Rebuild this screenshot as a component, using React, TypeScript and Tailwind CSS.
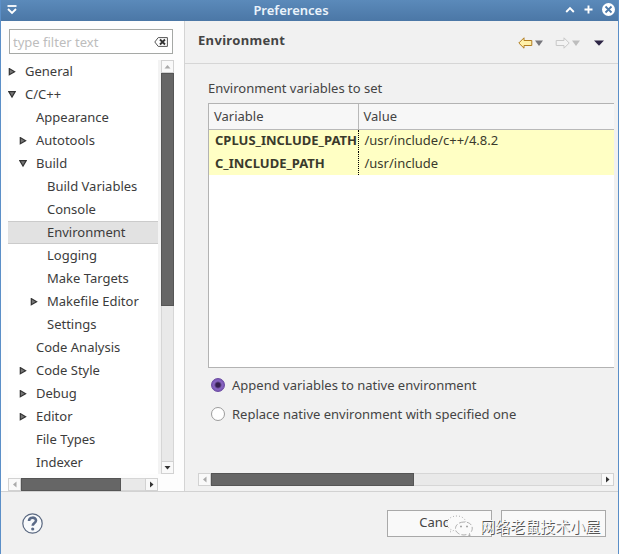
import React from "react";

type Node = { label: string; depth: number; state?: "open" | "closed"; selected?: boolean };

const nodes: Node[] = [
  { label: "General", depth: 0, state: "closed" },
  { label: "C/C++", depth: 0, state: "open" },
  { label: "Appearance", depth: 1 },
  { label: "Autotools", depth: 1, state: "closed" },
  { label: "Build", depth: 1, state: "open" },
  { label: "Build Variables", depth: 2 },
  { label: "Console", depth: 2 },
  { label: "Environment", depth: 2, selected: true },
  { label: "Logging", depth: 2 },
  { label: "Make Targets", depth: 2 },
  { label: "Makefile Editor", depth: 2, state: "closed" },
  { label: "Settings", depth: 2 },
  { label: "Code Analysis", depth: 1 },
  { label: "Code Style", depth: 1, state: "closed" },
  { label: "Debug", depth: 1, state: "closed" },
  { label: "Editor", depth: 1, state: "closed" },
  { label: "File Types", depth: 1 },
  { label: "Indexer", depth: 1 },
];

const indents = ["", "pl-[11px]", "pl-[22px]"];

function Expander({ state }: { state?: "open" | "closed" }) {
  return (
    <span className="flex w-[17px] shrink-0 items-center">
      {state && (
        <svg width="8" height="8" viewBox="0 0 8 8" fill="#777" stroke="#333" strokeWidth="1.2">
          <path d={state === "open" ? "M0.8 0.6H7.2L4 6Z" : "M1.3 0.6V6.8L6.6 3.7Z"} />
        </svg>
      )}
    </span>
  );
}

const arrows = {
  up: "M0.5 5.5H6.5L3.5 2Z",
  down: "M0.5 2H6.5L3.5 5.5Z",
  left: "M5.5 0.5V6.5L2 3.5Z",
  right: "M2 0.5V6.5L5.5 3.5Z",
};

function ScrollButton({ dir, dim }: { dir: keyof typeof arrows; dim?: boolean }) {
  return (
    <button
      aria-label={"Scroll " + dir}
      className="flex size-[13px] shrink-0 items-center justify-center border border-[#d2d2d2] bg-[#f9f9f9]"
    >
      <svg width="7" height="7" viewBox="0 0 7 7" fill={dim ? "#aaa" : "#333"}>
        <path d={arrows[dir]} />
      </svg>
    </button>
  );
}

function TitleBar() {
  return (
    <header className="flex h-[21px] items-center bg-linear-to-b from-[#5b8aba] to-[#4b77a6] pr-[3px] pb-[2px] pl-[6px] text-white">
      <button aria-label="Window menu" className="w-[10px]">
        <svg width="10" height="10" viewBox="0 0 10 10" fill="none" stroke="#fff">
          <path d="M0.5 1H9.5" strokeWidth="1.8" />
          <path d="M1 4L5 8L9 4" strokeWidth="1.8" />
        </svg>
      </button>
      <h1 className="flex-1 text-center text-[13px] leading-[18px] font-semibold text-[#eaf3fb]">Preferences</h1>
      <div className="flex items-center gap-[9px]">
        <button aria-label="Roll up">
          <svg width="10" height="10" viewBox="0 0 10 10" fill="none" stroke="#fff" strokeWidth="1.9">
            <path d="M1.2 7L5 3.2L8.8 7" />
          </svg>
        </button>
        <button aria-label="Maximize">
          <svg width="9" height="9" viewBox="0 0 9 9" stroke="#fff" strokeWidth="1.9">
            <path d="M0.5 4.5H8.5M4.5 0.5V8.5" />
          </svg>
        </button>
        <button aria-label="Close">
          <svg width="13" height="13" viewBox="0 0 13 13">
            <circle cx="6.5" cy="6.5" r="6.5" fill="#fff" />
            <path d="M3.5 3.5L9.5 9.5M9.5 3.5L3.5 9.5" stroke="#4e7bab" strokeWidth="1.8" />
          </svg>
        </button>
      </div>
    </header>
  );
}

function Sidebar() {
  return (
    <nav className="flex w-[184px] shrink-0 flex-col border-r border-[#d4d4d4] bg-[#fdfdfd] pt-2 pr-[10px] pl-[7px]">
      <div className="mr-px ml-px flex h-[25px] items-center border border-[#a5a8a5] bg-white pr-1 pl-[3px]">
        <input
          aria-label="Filter"
          placeholder="type filter text"
          className="min-w-0 flex-1 bg-transparent text-[13px] leading-[18px] text-[#3c3c3c] outline-none placeholder:text-[#bdbdbd]"
        />
        <button aria-label="Clear filter">
          <svg width="14" height="10" viewBox="0 0 14 10">
            <path d="M4.2 0.6H13.4V9.4H4.2L0.8 5Z" fill="#fff" stroke="#555" />
            <path d="M6 2.5L11 7.5M11 2.5L6 7.5" stroke="#333" strokeWidth="1.9" />
          </svg>
        </button>
      </div>
      <div className="mt-[6px] flex min-h-0 flex-1">
        <ul className="min-w-0 flex-1 bg-white">
          {nodes.map((n) => (
            <li
              key={n.label}
              className={
                "flex h-[23px] items-center border-y text-[13px] whitespace-nowrap text-[#3c3c3c] " +
                (n.selected ? "border-[#cbcbcb] bg-[#e2e2e2] " : "border-transparent ") +
                indents[n.depth]
              }
            >
              <Expander state={n.state} />
              {n.label}
            </li>
          ))}
        </ul>
        <div className="flex w-4 flex-col bg-[#f3f3f3] pl-[3px]">
          <ScrollButton dir="up" dim />
          <div className="flex-1 border-x border-[#d6d6d6] bg-[#e9e9e9]">
            <div className="-mx-px h-[233px] border border-[#555] bg-[#666]" />
          </div>
          <ScrollButton dir="down" />
        </div>
      </div>
      <div className="mt-[4px] mr-4 flex h-[13px]">
        <ScrollButton dir="left" dim />
        <div className="flex-1 border-y border-[#d6d6d6] bg-[#e9e9e9]">
          <div className="-my-px h-[13px] w-[81%] border border-[#555] bg-[#666]" />
        </div>
        <ScrollButton dir="right" />
      </div>
    </nav>
  );
}

function DropMark({ color }: { color: string }) {
  return (
    <svg width="8" height="6" viewBox="0 0 8 6">
      <path d="M0 0.5H8L4 6Z" fill={color} />
    </svg>
  );
}

function PageHeader() {
  return (
    <div className="flex h-[43px] items-center border-b border-[#d6d6d6] pr-[14px] pb-[2px] pl-[13px]">
      <h2 className="flex-1 text-[13px] font-bold tracking-wide text-[#444]">Environment</h2>
      <div className="flex items-center pt-[3px]">
        <button aria-label="Back" className="flex items-center gap-[2px]">
          <svg width="15" height="12" viewBox="0 0 15 12">
            <path d="M0.8 6L6 0.8V3.5H13.8V8.5H6V11.2Z" fill="#fff0a8" stroke="#b17d22" />
          </svg>
          <DropMark color="#77777d" />
        </button>
        <button aria-label="Forward" disabled className="ml-3 flex items-center gap-[2px]">
          <svg width="15" height="12" viewBox="0 0 15 12">
            <path d="M14.2 6L9 0.8V3.5H1.2V8.5H9V11.2Z" fill="#f3f3f3" stroke="#c8c8c8" />
          </svg>
          <DropMark color="#bdbdbd" />
        </button>
        <button aria-label="View menu" className="ml-[14px]">
          <svg width="10" height="6" viewBox="0 0 10 6">
            <path d="M0 0.5H10L5 5.8Z" fill="#2d2545" />
          </svg>
        </button>
      </div>
    </div>
  );
}

function Content() {
  return (
    <main className="flex min-w-0 flex-1 flex-col">
      <PageHeader />
      <section className="flex flex-1 flex-col pr-1 pl-[23px]">
        <p id="vars" className="mt-[15px] mb-[5px] text-[13px] leading-[19px]">
          Environment variables to set
        </p>
        <div className="h-[265px] border border-r-0 border-[#b3b3b3] bg-white">
          <table aria-labelledby="vars" className="w-full table-fixed border-collapse text-left text-[13px]">
            <thead>
              <tr className="h-[25px] border-b border-[#b9b9b9] bg-[#f7f7f7]">
                <th className="w-[149px] border-r border-[#b9b9b9] pl-[5px] font-normal">Variable</th>
                <th className="pl-[5px] font-normal">Value</th>
              </tr>
            </thead>
            <tbody className="bg-[#ffffc4] text-[#3a3a2c]">
              <tr className="h-[23px]">
                <td className="border-r border-dotted border-black pl-[6px] font-bold">CPLUS_INCLUDE_PATH</td>
                <td className="pl-[6px]">/usr/include/c++/4.8.2</td>
              </tr>
              <tr className="h-[23px]">
                <td className="border-r border-dotted border-black pl-[6px] font-bold">C_INCLUDE_PATH</td>
                <td className="pl-[6px]">/usr/include</td>
              </tr>
            </tbody>
          </table>
        </div>
        <div className="mt-[7px] ml-[3px] flex flex-col gap-[9px] text-[13px] leading-5">
          {["Append variables to native environment", "Replace native environment with specified one"].map((t, i) => (
            <label key={t} className="flex items-center gap-[7px]">
              <input
                type="radio"
                name="mode"
                defaultChecked={i === 0}
                className="size-[14px] appearance-none rounded-full border border-[#9c9c9c] bg-white checked:border-[#6948a0] checked:bg-[radial-gradient(circle,#35204f_0_2px,#8a68c4_4px,#7350ae_7px)]"
              />
              {t}
            </label>
          ))}
        </div>
      </section>
      <div className="mr-[4px] mb-[5px] ml-[13px] flex h-[13px]">
        <ScrollButton dir="left" dim />
        <div className="flex-1 border-y border-[#d6d6d6] bg-[#e9e9e9]">
          <div className="-my-px h-[13px] w-[52%] border border-[#555] bg-[#666]" />
        </div>
        <ScrollButton dir="right" />
      </div>
    </main>
  );
}

function Watermark() {
  return (
    <div className="pointer-events-none absolute top-[23px] right-[18px] flex items-center gap-[6px]">
      <svg width="28" height="22" viewBox="0 0 28 22" fill="#fafafa" stroke="#999" strokeWidth="0.8">
        <path d="M11 1C5 1 1 4.500 1 8.500C1 11 2.500 13 5 14.500L4 17L7.500 15.500C13 17 20 14 20 8.500C20 4 16 1 11 1Z" strokeDasharray="1 2" />
        <path d="M18 7C13 7 9.500 10 9.500 13.500C9.500 17 13 20 18 20L21 19.500L24 21L23.500 18.500C28 15.500 27.500 7 18 7Z" strokeDasharray="5 2" />
        <path d="M14.500 11.500H15.500M20.500 11.500H21.500" stroke="#555" strokeWidth="1.500" />
      </svg>
      <span className="text-[15px] leading-[22px] whitespace-nowrap text-[#f8f8f8] [text-shadow:1px_1px_0_#555]">
        网络老鼠技术小屋
      </span>
    </div>
  );
}

export default function App() {
  return (
    <div className="bg-white pr-px pb-[3px] font-['Noto_Sans','Noto_Sans_CJK_SC',sans-serif] text-[#444]">
      <div className="border-x border-[#5b8fc8] bg-[#f1f1f1]">
        <TitleBar />
        <div className="flex h-[471px] border-b border-[#d2d2d2]">
          <Sidebar />
          <Content />
        </div>
        <footer className="relative flex h-[62px] items-center justify-between pr-[12px] pl-[21px]">
          <button aria-label="Help">
            <svg width="21" height="21" viewBox="0 0 21 21" fill="none">
              <circle cx="10.5" cy="10.5" r="9.7" fill="#f8fafc" stroke="#5a6880" strokeWidth="1.2" />
              <path d="M7 8C7 3.500 14 3.800 14 7.500C14 10 10.700 10 10.700 12.800" stroke="#5b6b88" strokeWidth="2.600" />
              <circle cx="10.700" cy="16" r="1.600" fill="#5b6b88" />
            </svg>
          </button>
          <div className="flex gap-[9px]">
            <button className="h-[27px] w-[105px] border border-[#a9a9a9] bg-[#f9f9f9] text-[13px]">Cancel</button>
            <button aria-label="OK" className="h-[27px] w-[105px] border border-[#a9a9a9] bg-[#f9f9f9] text-[13px]" />
          </div>
          <Watermark />
        </footer>
      </div>
    </div>
  );
}
